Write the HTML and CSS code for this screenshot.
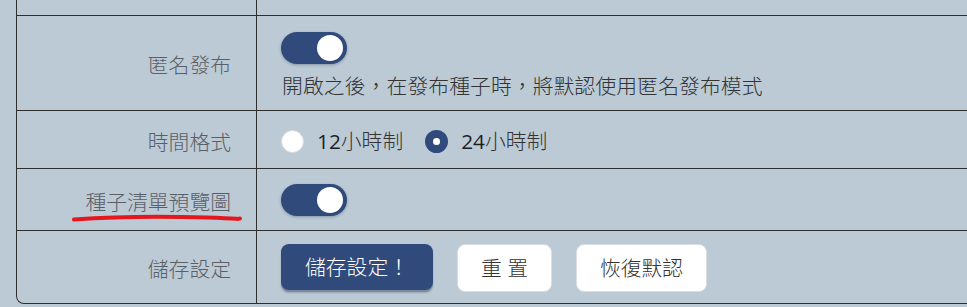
FILE: index.html
```html
<!DOCTYPE html>
<html lang="zh-Hant">
<head>
<meta charset="utf-8">
<title>設定</title>
<link rel="stylesheet" href="styles.css">
</head>
<body>
<div class="viewport">
  <div class="settings">
    <div class="row row-top">
      <div class="label"></div>
      <div class="value"></div>
    </div>
    <div class="row row-anon">
      <div class="label">匿名發布</div>
      <div class="value value-stack">
        <span class="toggle on"><span class="knob"></span></span>
        <p class="desc">開啟之後，在發布種子時，將默認使用匿名發布模式</p>
      </div>
    </div>
    <div class="row row-time">
      <div class="label">時間格式</div>
      <div class="value radios">
        <label class="radio"><span class="dot"></span><span class="rtext"><span class="num">12</span>小時制</span></label>
        <label class="radio"><span class="dot checked"></span><span class="rtext"><span class="num">24</span>小時制</span></label>
      </div>
    </div>
    <div class="row row-preview">
      <div class="label marked">種子清單預覽圖
        <svg class="scribble" width="240" height="62" viewBox="0 0 240 62" aria-hidden="true">
          <path d="M57 50.5 C 95 47.8, 150 47.2, 190 48.6 S 218 50.2, 223 49.6" fill="none" stroke="#e5171e" stroke-width="4" stroke-linecap="round"/>
        </svg>
      </div>
      <div class="value">
        <span class="toggle on"><span class="knob"></span></span>
      </div>
    </div>
    <div class="row row-save">
      <div class="label">儲存設定</div>
      <div class="value buttons">
        <button class="btn btn-primary" type="button">儲存設定！</button>
        <button class="btn btn-light" type="button">重 置</button>
        <button class="btn btn-light" type="button">恢復默認</button>
      </div>
    </div>
  </div>
</div>
</body>
</html>
```

FILE: styles.css
```css
html, body {
  margin: 0;
  padding: 0;
  background: #bccad6;
}

body {
  font-family: "Open Sans", "Noto Sans CJK TC", sans-serif;
  font-size: 20.8px;
  color: #333;
}

.viewport {
  width: 967px;
  height: 307px;
  overflow: hidden;
}

.settings {
  margin-left: 16px;
  width: 1000px;
  border-left: 1px solid #2f2f2f;
  border-bottom: 1px solid #2f2f2f;
  border-bottom-left-radius: 8px;
}

.row {
  display: grid;
  grid-template-columns: 240px 1fr;
  box-sizing: border-box;
  border-bottom: 1px solid #2f2f2f;
}

.row:last-child {
  border-bottom: none;
}

.row-top { height: 16px; }
.row-anon { height: 95px; }
.row-time { height: 58px; }
.row-preview { height: 62px; }
.row-save { height: 72px; }

.label {
  box-sizing: border-box;
  border-right: 1px solid #2f2f2f;
  padding-right: 25px;
  display: flex;
  align-items: center;
  justify-content: flex-end;
  color: #5a5f66;
  font-weight: 300;
  line-height: 30px;
  padding-top: 4px;
}

.marked {
  position: relative;
}

.scribble {
  position: absolute;
  left: 0;
  top: 0;
}

.value {
  padding-left: 24px;
  display: flex;
  align-items: center;
}

.value-stack {
  flex-direction: column;
  align-items: flex-start;
  justify-content: flex-start;
  padding-top: 16px;
  box-sizing: border-box;
}

.toggle {
  display: inline-flex;
  align-items: center;
  justify-content: flex-end;
  width: 66px;
  height: 32px;
  box-sizing: border-box;
  padding-right: 4px;
  border-radius: 16px;
  background: #2f4a7b;
  box-shadow: 0 1px 3px rgba(30, 45, 70, 0.35);
}

.knob {
  width: 26px;
  height: 26px;
  border-radius: 50%;
  background: #fff;
}

.desc {
  margin: 7px 0 0 1px;
  line-height: 30px;
  font-weight: 300;
  color: #333;
  letter-spacing: 0.1px;
}

.radios {
  gap: 22px;
  padding-top: 3px;
}

.radio {
  display: inline-flex;
  align-items: center;
  gap: 13px;
}

.dot {
  width: 23px;
  height: 23px;
  box-sizing: border-box;
  border-radius: 50%;
  background: #fff;
  border: 1px solid #d6dbe0;
}

.dot.checked {
  background: #2f4a7b;
  border: 8px solid #2f4a7b;
  background-clip: padding-box;
  position: relative;
}

.dot.checked::after {
  content: "";
  position: absolute;
  inset: 0;
  border-radius: 50%;
  background: #fff;
}

.rtext {
  color: #333;
  font-weight: 300;
  line-height: 30px;
}

.num {
  font-weight: 400;
  color: #1f1f1f;
}

.buttons {
  gap: 24px;
  padding-top: 1px;
}

.btn {
  font-family: "Open Sans", "Noto Sans CJK TC", sans-serif;
  font-size: 20.8px;
  font-weight: 300;
  height: 48px;
  padding: 0 23px;
  border-radius: 8px;
  cursor: pointer;
  line-height: 46px;
}

.btn-primary {
  background: #2f4a7b;
  color: #fff;
  border: none;
  padding: 0 24px;
  height: 46px;
  margin-bottom: 2px;
  box-shadow: 0 2px 0 #7e8a99, 0 3px 2px rgba(70, 85, 105, 0.35);
}

.btn-light {
  background: #fff;
  color: #333;
  border: 1px solid #d9dde2;
}
```
